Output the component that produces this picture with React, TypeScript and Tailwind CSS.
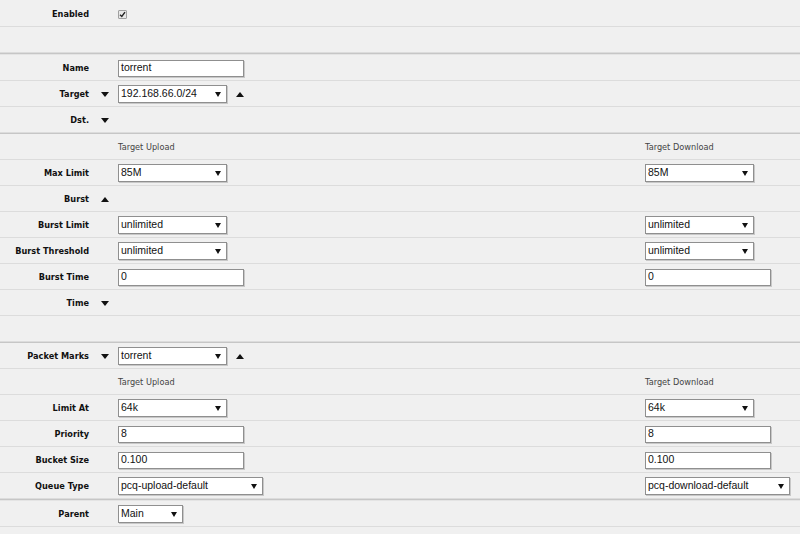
import React from "react";

const labelFont = { fontFamily: '"DejaVu Sans", Verdana, sans-serif' };

function Down() {
  return (
    <svg width="8" height="5" viewBox="0 0 8 5" className="block">
      <path d="M0 0 L8 0 L4 5 Z" fill="#111" />
    </svg>
  );
}
function Up() {
  return (
    <svg width="8" height="5" viewBox="0 0 8 5" className="block">
      <path d="M0 5 L8 5 L4 0 Z" fill="#111" />
    </svg>
  );
}

function Select({ value, w }: { value: string; w: string }) {
  return (
    <div
      className={`${w} h-[18px] bg-white border border-[#8f8f8f] shadow-[1px_1px_0_#c8c8c8] flex items-center justify-between pl-[2px] pr-[5px] text-[10.5px] text-[#111] font-['Liberation_Sans',Arial,sans-serif]`}
    >
      <span className="leading-none -mt-[1px]">{value}</span>
      <svg width="6" height="5" viewBox="0 0 6 5" className="block">
        <path d="M0 0 L6 0 L3 5 Z" fill="#111" />
      </svg>
    </div>
  );
}

function Input({ value }: { value: string }) {
  return (
    <div className="w-[126px] h-[17px] bg-white border border-[#8f8f8f] shadow-[1px_1px_0_#c8c8c8] flex items-center pl-[2px] text-[10.5px] text-[#111] font-['Liberation_Sans',Arial,sans-serif]">
      <span className="leading-none -mt-[1px]">{value}</span>
    </div>
  );
}

function Row({
  label,
  toggle,
  children,
  right,
}: {
  label?: string;
  toggle?: React.ReactNode;
  children?: React.ReactNode;
  right?: React.ReactNode;
}) {
  return (
    <div className="h-[26px] border-b border-[#dcdcdc] flex items-center">
      <div
        className="w-[90px] shrink-0 text-right text-[8.2px] font-bold text-[#111] pr-[1px] pt-[2px]"
        style={labelFont}
      >
        {label}
      </div>
      <div className="w-[28px] shrink-0 flex justify-center pl-[2px] pt-[1px]">{toggle}</div>
      <div className="w-[527px] shrink-0 flex items-center gap-[6px] pt-[1px]">{children}</div>
      <div className="flex items-center pt-[1px]">{right}</div>
    </div>
  );
}

function Header() {
  return (
    <Row
      right={
        <span className="text-[8.2px] text-[#444]" style={labelFont}>
          Target Download
        </span>
      }
    >
      <span className="text-[8.2px] text-[#444]" style={labelFont}>
        Target Upload
      </span>
    </Row>
  );
}

function Sep({ thick }: { thick?: boolean }) {
  return thick ? (
    <div className="h-[2px] bg-[#c6c6c6] border-b border-[#e4e4e4]" />
  ) : (
    <div className="h-[1px] bg-[#c6c6c6]" />
  );
}

export default function App() {
  return (
    <div className="w-[800px] h-[534px] bg-[#f0f0f0] overflow-hidden pt-[1px]">
      <Row label="Enabled">
        <div className="mt-[1px] w-[9px] h-[9px] border border-[#a0a0a0] bg-[#e8e8e8] rounded-[1px] flex items-center justify-center">
          <svg width="7" height="7" viewBox="0 0 7 7">
            <path d="M1 3.8 L2.8 5.5 L6 1.2" stroke="#222" strokeWidth="1.4" fill="none" />
          </svg>
        </div>
      </Row>
      <Row />
      <Sep thick />
      <Row label="Name">
        <Input value="torrent" />
      </Row>
      <Row label="Target" toggle={<Down />}>
        <Select value="192.168.66.0/24" w="w-[109px]" />
        <div className="pl-[3px]">
          <Up />
        </div>
      </Row>
      <Row label="Dst." toggle={<Down />} />
      <Sep />
      <Header />
      <Row label="Max Limit" right={<Select value="85M" w="w-[109px]" />}>
        <Select value="85M" w="w-[109px]" />
      </Row>
      <Row label="Burst" toggle={<Up />} />
      <Row label="Burst Limit" right={<Select value="unlimited" w="w-[109px]" />}>
        <Select value="unlimited" w="w-[109px]" />
      </Row>
      <Row label="Burst Threshold" right={<Select value="unlimited" w="w-[109px]" />}>
        <Select value="unlimited" w="w-[109px]" />
      </Row>
      <Row label="Burst Time" right={<Input value="0" />}>
        <Input value="0" />
      </Row>
      <Row label="Time" toggle={<Down />} />
      <Row />
      <Sep />
      <Row label="Packet Marks" toggle={<Down />}>
        <Select value="torrent" w="w-[109px]" />
        <div className="pl-[3px]">
          <Up />
        </div>
      </Row>
      <Header />
      <Row label="Limit At" right={<Select value="64k" w="w-[109px]" />}>
        <Select value="64k" w="w-[109px]" />
      </Row>
      <Row label="Priority" right={<Input value="8" />}>
        <Input value="8" />
      </Row>
      <Row label="Bucket Size" right={<Input value="0.100" />}>
        <Input value="0.100" />
      </Row>
      <Row
        label="Queue Type"
        right={<Select value="pcq-download-default" w="w-[145px]" />}
      >
        <Select value="pcq-upload-default" w="w-[145px]" />
      </Row>
      <Sep thick />
      <Row label="Parent">
        <Select value="Main" w="w-[65px]" />
      </Row>
    </div>
  );
}
